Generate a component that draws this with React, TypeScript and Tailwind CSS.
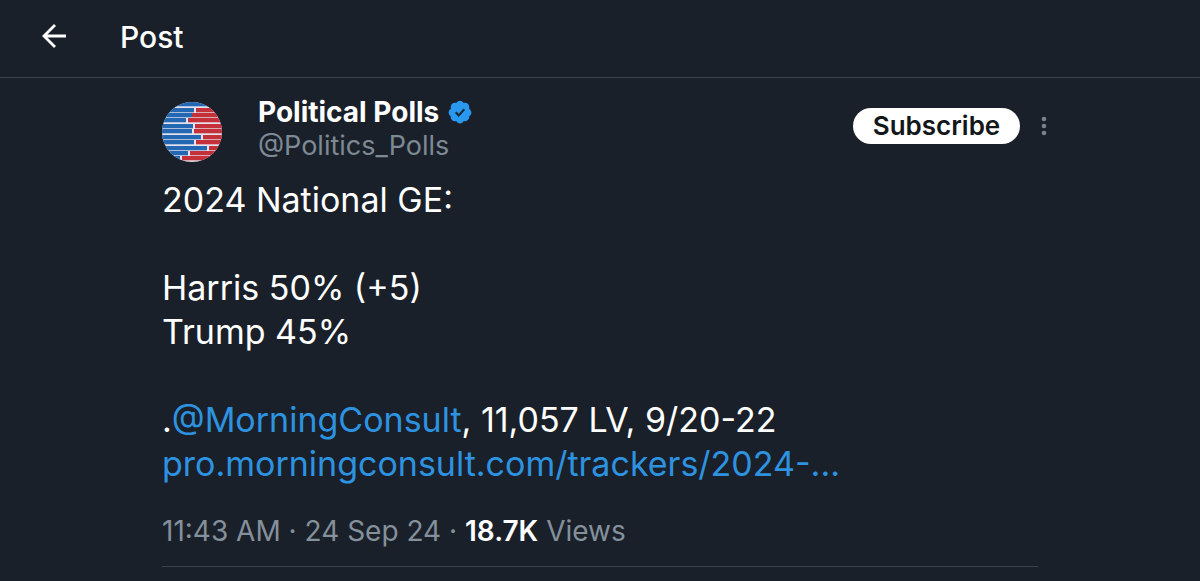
const SEAMS = [
  { y: 0, split: 60, tick: false },
  { y: 6, split: 32, tick: true },
  { y: 11, split: 30, tick: false },
  { y: 16, split: 24, tick: true },
  { y: 22, split: 31, tick: true },
  { y: 27, split: 30, tick: true },
  { y: 33, split: 39, tick: true },
  { y: 38, split: 32, tick: true },
  { y: 44, split: 45, tick: true },
  { y: 49, split: 26, tick: true },
  { y: 54, split: 18, tick: true },
];

export default function App() {
  return (
    <div className="min-h-screen bg-[#1a2029] font-['Inter',sans-serif] text-white">
      <header className="flex h-[78px] items-center gap-[52px] border-b border-[#3c434b] px-10 pb-1">
        <button type="button" aria-label="Back">
          <BackArrow />
        </button>
        <h1 className="text-[30px] leading-9 font-medium">Post</h1>
      </header>

      <main className="mx-auto max-w-[1200px] px-[162px]">
        <article className="border-b border-[#3c434b] pb-4">
          {/* Author */}
          <div className="flex items-start pt-4">
            <Avatar />
            <div className="ml-9 flex-1">
              <div className="flex items-center gap-2">
                <span className="text-[28px] leading-9 font-bold">Political Polls</span>
                <VerifiedBadge />
              </div>
              <div className="text-[27px] leading-8 text-[#7d8994]">@Politics_Polls</div>
            </div>
            <div className="mt-[14px] -mr-[14px] flex items-center gap-4">
              <button
                type="button"
                className="h-9 w-[167px] rounded-full bg-white text-[26px] leading-9 font-semibold text-[#14171a]"
              >
                Subscribe
              </button>
              <button type="button" aria-label="More">
                <MoreDots />
              </button>
            </div>
          </div>

          {/* Post text */}
          <div className="mt-4 text-[34px] leading-[44px]">
            <p>2024 National GE:</p>
            <p className="mt-11">Harris 50% (+5)</p>
            <p>Trump 45%</p>
            <p className="mt-11">
              .<a href="#" className="text-[#2d93e0]">@MorningConsult</a>, 11,057 LV, 9/20-22
            </p>
            <p>
              <a href="#" className="text-[#2d93e0]">pro.morningconsult.com/trackers/2024-...</a>
            </p>
          </div>

          <p className="mt-[26px] text-[28px] leading-[38px] text-[#84909b]">
            11:43 AM · 24 Sep 24 · <span className="font-semibold text-white">18.7K</span> Views
          </p>
        </article>
      </main>
    </div>
  );
}

function BackArrow() {
  return (
    <svg
      className="block"
      width="28"
      height="28"
      viewBox="0 0 28 28"
      fill="none"
      stroke="white"
      strokeWidth="2.8"
    >
      <path d="M26 13H4M15 2L4 13L15 24" />
    </svg>
  );
}

function Avatar() {
  return (
    <svg className="mt-2 block shrink-0" width="60" height="60" viewBox="0 0 60 60">
      <defs>
        <clipPath id="avatar">
          <circle cx="30" cy="30" r="30" />
        </clipPath>
      </defs>
      <g clipPath="url(#avatar)">
        <rect width="60" height="60" fill="#e6e3ec" />
        {SEAMS.map((s) => (
          <g key={s.y}>
            <rect x="0" y={s.y} width={s.split} height="4.3" fill="#2468b4" />
            <rect
              x={s.tick ? s.split + 2 : s.split}
              y={s.y}
              width="60"
              height="4.3"
              fill="#c5313a"
            />
          </g>
        ))}
      </g>
    </svg>
  );
}

function VerifiedBadge() {
  return (
    <svg className="block" width="26" height="26" viewBox="0 0 24 24" aria-label="Verified">
      <path
        fill="#2899ef"
        d="M22.5 12.5c0-1.58-.875-2.95-2.148-3.6.154-.435.238-.905.238-1.4 0-2.21-1.71-3.998-3.818-3.998-.47 0-.92.084-1.336.25C14.818 2.415 13.51 1.5 12 1.5s-2.816.917-3.437 2.25c-.415-.165-.866-.25-1.336-.25-2.11 0-3.818 1.79-3.818 4 0 .494.083.964.237 1.4-1.272.65-2.147 2.018-2.147 3.6 0 1.495.782 2.798 1.942 3.486-.02.17-.032.34-.032.514 0 2.21 1.708 4 3.818 4 .47 0 .92-.086 1.335-.25.62 1.334 1.926 2.25 3.437 2.25 1.512 0 2.818-.916 3.437-2.25.415.163.865.248 1.336.248 2.11 0 3.818-1.79 3.818-4 0-.174-.012-.344-.033-.513 1.158-.687 1.943-1.99 1.943-3.484z"
      />
      <path d="M8 12.3L10.8 15.1L16 9.4" fill="none" stroke="#1a2a3a" strokeWidth="2" />
    </svg>
  );
}

function MoreDots() {
  return (
    <svg className="block" width="16" height="24" viewBox="0 0 16 24" fill="#77838e">
      <circle cx="8" cy="5" r="2.3" />
      <circle cx="8" cy="12" r="2.3" />
      <circle cx="8" cy="19" r="2.3" />
    </svg>
  );
}
